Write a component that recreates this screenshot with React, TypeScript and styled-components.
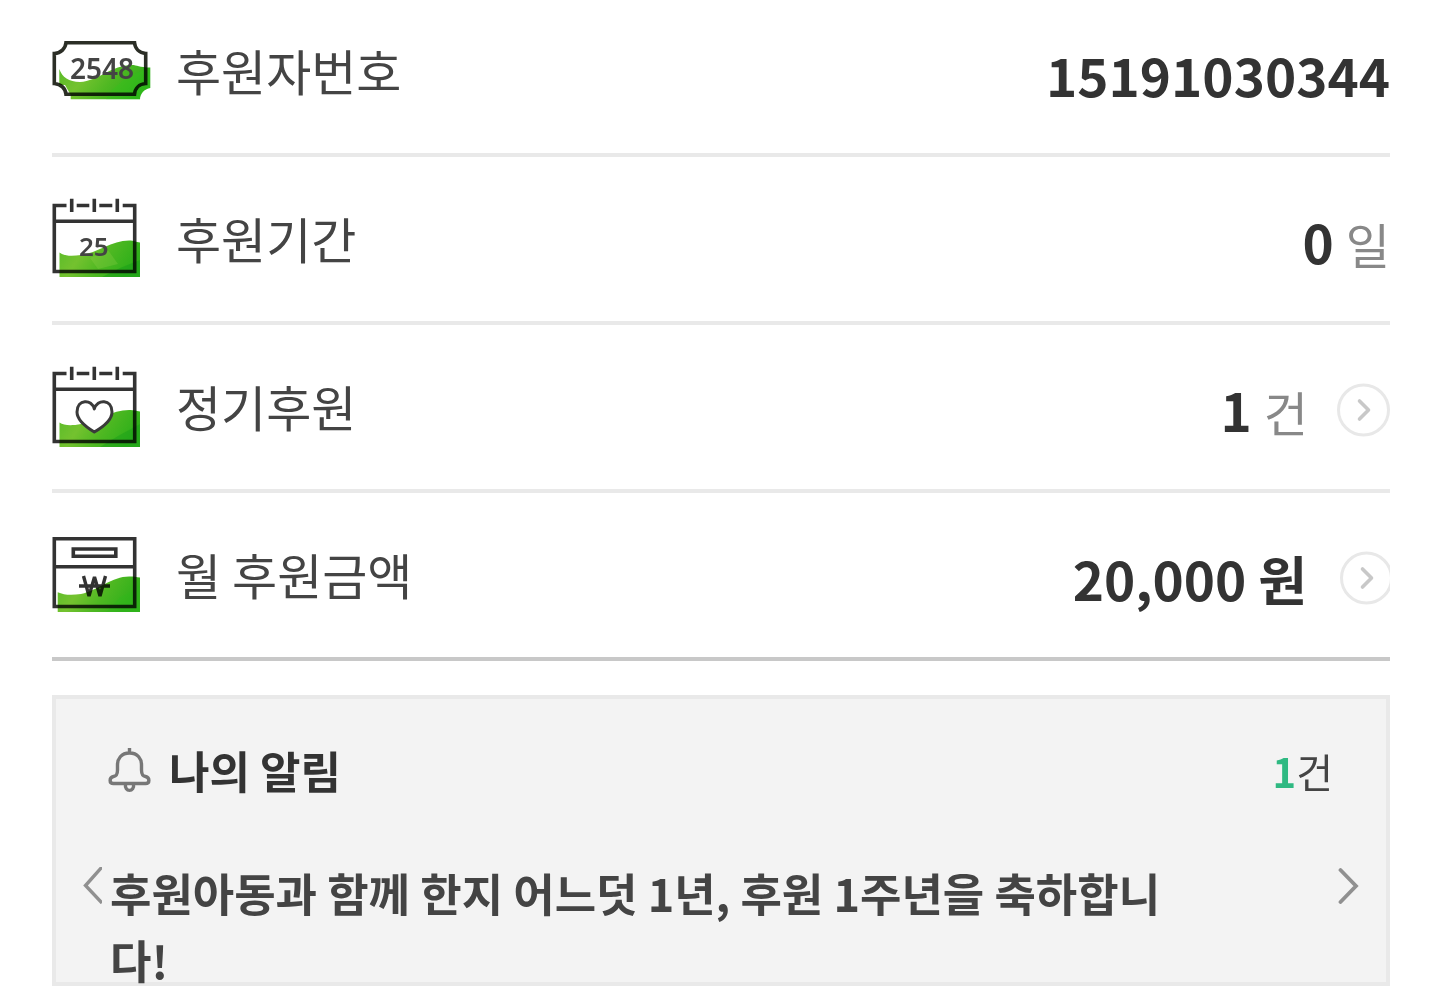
import React from 'react';
import styled, { createGlobalStyle } from 'styled-components';

const GlobalStyle = createGlobalStyle`
  * {
    box-sizing: border-box;
  }
  body {
    margin: 0;
    background: #fff;
    color: #444;
    font-family: 'Noto Sans CJK KR', 'Noto Sans', sans-serif;
  }
`;

const Page = styled.main`
  padding: 0 48px 5px 52px;
`;

const SummaryList = styled.ul`
  margin: 0 0 34px;
  padding: 0;
  list-style: none;
`;

const SummaryRow = styled.li`
  display: flex;
  align-items: center;
  padding: 45px 0 47px;
  border-bottom: 4px solid #e9e9e9;

  &:first-child {
    padding-top: 34px;
  }
  &:last-child {
    border-bottom-color: #c8c8c8;
  }
`;

const IconSlot = styled.span`
  display: flex;
  align-items: center;
  flex: 0 0 124px;
  height: 72px;

  svg {
    flex: none;
  }
`;

const RowLabel = styled.span`
  flex: 1;
  font-size: 49px;
  line-height: 70px;
`;

const RowValue = styled.span`
  display: flex;
  align-items: center;
  height: 72px;
  padding-top: 8px;
`;

const Amount = styled.strong`
  color: #333;
  font-size: 53px;
  font-weight: 700;
  line-height: 70px;
  white-space: pre;
`;

const Unit = styled.span`
  color: #888;
  font-size: 48px;
  font-weight: 400;
`;

const MoreLink = styled.a<{ $gap: number }>`
  display: flex;
  margin-left: ${({ $gap }) => $gap}px;
`;

const NoticeCard = styled.section`
  padding: 38px 26px 0;
  border: 4px solid #e9e9e9;
  background: #f3f3f3;
`;

const NoticeHeader = styled.header`
  display: flex;
  align-items: center;
  padding: 0 27px 0 26px;
`;

const NoticeTitle = styled.h2`
  flex: 1;
  margin: 0 0 0 18px;
  color: #333;
  font-size: 44px;
  font-weight: 700;
  line-height: 66px;
`;

const NoticeCount = styled.span`
  padding-top: 2px;
  font-size: 40px;
  line-height: 64px;

  strong {
    color: #2fb982;
    font-weight: 700;
  }
`;

const NoticeSlider = styled.div`
  display: flex;
  align-items: flex-start;
  height: 123px;
  margin-top: 56px;
`;

const SlideButton = styled.button`
  display: flex;
  flex: none;
  padding: 8px 0 0;
  border: 0;
  background: none;
  cursor: pointer;
`;

const NoticeText = styled.p`
  flex: 1;
  margin: 0;
  padding: 0 130px 0 8px;
  font-size: 45px;
  font-weight: 700;
  line-height: 67px;
`;

function GreenFill({ id }: { id: string }) {
  return (
    <linearGradient id={id} x1="0" y1="0" x2="1" y2="0.3">
      <stop offset="0" stopColor="#58bb28" />
      <stop offset="0.35" stopColor="#74c22f" />
      <stop offset="0.65" stopColor="#4fb822" />
      <stop offset="1" stopColor="#30b01a" />
    </linearGradient>
  );
}

const Overprint = styled.g`
  mix-blend-mode: multiply;
`;

function TicketIcon() {
  return (
    <svg width="99" height="60" viewBox="0 0 99 60" aria-hidden="true">
      <defs><GreenFill id="ticketGreen" /></defs>
      <path
        d="M14 2.700H82.500C83 8.500 87 13 93.700 13.500V43.500C87 44 83 48.500 82.500 54.300H14C13.500 48.500 9 44 2.300 43.500V13.500C9 13 13.500 8.500 14 2.700Z"
        fill="#fff" stroke="#2b2e26" strokeWidth="3.600"
      />
      <Overprint>
        <path d="M7.300 29C10 37 17 42 28 42C46 41 60 25 80 25C85 25 87 27.500 98.300 27.500V48C92 49 88 54 88 59.300H18.700V55L13 45H7.300Z" fill="url(#ticketGreen)" />
        <path d="M60 50L76 36L98 28V48C92 49 88 54 88 59.300H54Z" fill="#30c81c" opacity="0.3" />
      </Overprint>
      <text x="18" y="39" fontFamily="'Noto Sans', sans-serif" fontSize="28" fontWeight="600" fill="#444">2548</text>
    </svg>
  );
}

function CalendarFrame({ bottom }: { bottom: number }) {
  return (
    <path
      d={`M14.500 7.500H2.300V${bottom}H82.700V7.500H70.700M24.700 7.500H37.300M47.300 7.500H60.300M19.700 .7V14M42.300 .7V14M65.300 .7V14M2.300 23.200H82.700`}
      fill="none" stroke="#333" strokeWidth="3.600"
    />
  );
}

function CalendarDayIcon() {
  return (
    <svg width="88" height="80" viewBox="0 0 88 80" aria-hidden="true">
      <defs><GreenFill id="dayGreen" /></defs>
      <CalendarFrame bottom={73.5} />
      <Overprint>
        <path d="M7.500 54.500C12 58 19 58.500 29 57C45 55 60 42.500 77 42.500C82 42.500 84 44 88 44.500V79H7.500Z" fill="url(#dayGreen)" />
        <path d="M50 79L68 70L88 62V79Z" fill="#159b18" opacity="0.45" />
        <path d="M38 60L56 52L66 66L46 71Z" fill="#9bd350" opacity="0.25" />
      </Overprint>
      <text x="27" y="58" fontFamily="'Noto Sans', sans-serif" fontSize="26" fontWeight="600" fill="#444">25</text>
    </svg>
  );
}

function CalendarHeartIcon() {
  return (
    <svg width="88" height="81" viewBox="0 0 88 81" aria-hidden="true">
      <defs><GreenFill id="heartGreen" /></defs>
      <CalendarFrame bottom={75.5} />
      <Overprint>
        <path d="M7.500 56.500C12 59.500 19 60 29 58C45 55 60 44 77 44C82 44 84 45 88 45.500V81H7.500Z" fill="url(#heartGreen)" />
        <path d="M48 81L66 70L88 58V81Z" fill="#159b18" opacity="0.4" />
      </Overprint>
      <path
        d="M42.300 43C40 32.500 25 33 25 46C25 54 34 61 42.300 66C51 61 60 54 60 46C60 33 45 32.500 42.300 43Z"
        fill="#fff" stroke="#3a3a3a" strokeWidth="3" strokeLinejoin="round"
      />
    </svg>
  );
}

function DonationBoxIcon() {
  return (
    <svg width="88" height="75" viewBox="0 0 88 75" aria-hidden="true">
      <defs><GreenFill id="boxGreen" /></defs>
      <path d="M2.300 1.700H82.700V69.500H2.300ZM2.300 29.700H82.700M21.300 12H63.800V19.300H21.300Z" fill="none" stroke="#333" strokeWidth="3.600" />
      <path d="M31.500 39L37 59L42.500 40L48 59L53.500 39M27 49H58" fill="none" stroke="#333" strokeWidth="3.400" strokeLinejoin="bevel" />
      <Overprint>
        <path d="M5.700 55.300C12 58 19 58.500 29 57C47 53 60 39.500 77 39.500C82 39.500 84 40 88 40.500V75H5.700Z" fill="url(#boxGreen)" />
        <path d="M54 75L68 60L88 50V75Z" fill="#30b81c" opacity="0.3" />
      </Overprint>
    </svg>
  );
}

function CircleArrow({ width = 53 }: { width?: number }) {
  return (
    <svg width={width} height="54" viewBox={`0 0 ${width} 54`} aria-hidden="true">
      <circle cx="26.500" cy="27" r="25" fill="#fff" stroke="#e8e8e8" strokeWidth="3" />
      <path d="M22.500 18L31.500 27L22.500 36" fill="none" stroke="#c8c8c8" strokeWidth="3.600" strokeLinecap="round" strokeLinejoin="round" />
    </svg>
  );
}

function BellIcon() {
  return (
    <svg width="43" height="46" viewBox="0 0 43 46" fill="none" stroke="#777" strokeWidth="3.400" aria-hidden="true">
      <path d="M21.500 1V6M21.500 6C13 6 9.500 12 9.500 18V23C9.500 28 8 29 5.500 29.500C1 30.500 1 36.500 5.500 36.500H37.500C42 36.500 42 30.500 37.500 29.500C35 29 33.500 28 33.500 23V18C33.500 12 30 6 21.500 6Z" />
      <path d="M17.500 37C16 45.500 27 45.500 25.500 37" />
    </svg>
  );
}

export default function App() {
  return (
    <>
      <GlobalStyle />
      <Page>
        <SummaryList>
          <SummaryRow>
            <IconSlot><TicketIcon /></IconSlot>
            <RowLabel>후원자번호</RowLabel>
            <RowValue><Amount>15191030344</Amount></RowValue>
          </SummaryRow>
          <SummaryRow>
            <IconSlot><CalendarDayIcon /></IconSlot>
            <RowLabel>후원기간</RowLabel>
            <RowValue><Amount>0 <Unit>일</Unit></Amount></RowValue>
          </SummaryRow>
          <SummaryRow>
            <IconSlot><CalendarHeartIcon /></IconSlot>
            <RowLabel>정기후원</RowLabel>
            <RowValue>
              <Amount>1 <Unit>건</Unit></Amount>
              <MoreLink href="#regular" $gap={29} aria-label="정기후원 보기"><CircleArrow /></MoreLink>
            </RowValue>
          </SummaryRow>
          <SummaryRow>
            <IconSlot><DonationBoxIcon /></IconSlot>
            <RowLabel>월 후원금액</RowLabel>
            <RowValue>
              <Amount>20,000 원</Amount>
              <MoreLink href="#amount" $gap={33} aria-label="월 후원금액 보기"><CircleArrow width={50} /></MoreLink>
            </RowValue>
          </SummaryRow>
        </SummaryList>

        <NoticeCard>
          <NoticeHeader>
            <BellIcon />
            <NoticeTitle>나의 알림</NoticeTitle>
            <NoticeCount><strong>1</strong>건</NoticeCount>
          </NoticeHeader>
          <NoticeSlider>
            <SlideButton type="button" aria-label="이전 알림">
              <svg width="20" height="37" viewBox="0 0 20 37" aria-hidden="true">
                <path d="M20 0L3.500 18.500L20 36" fill="none" stroke="#909090" strokeWidth="3.400" />
              </svg>
            </SlideButton>
            <NoticeText>후원아동과 함께 한지 어느덧 1년, 후원 1주년을 축하합니다!</NoticeText>
            <SlideButton type="button" aria-label="다음 알림">
              <svg width="22" height="37" viewBox="0 0 22 37" aria-hidden="true">
                <path d="M2.500 3L18 19L2.500 35" fill="none" stroke="#909090" strokeWidth="3.800" strokeLinecap="round" />
              </svg>
            </SlideButton>
          </NoticeSlider>
        </NoticeCard>
      </Page>
    </>
  );
}
